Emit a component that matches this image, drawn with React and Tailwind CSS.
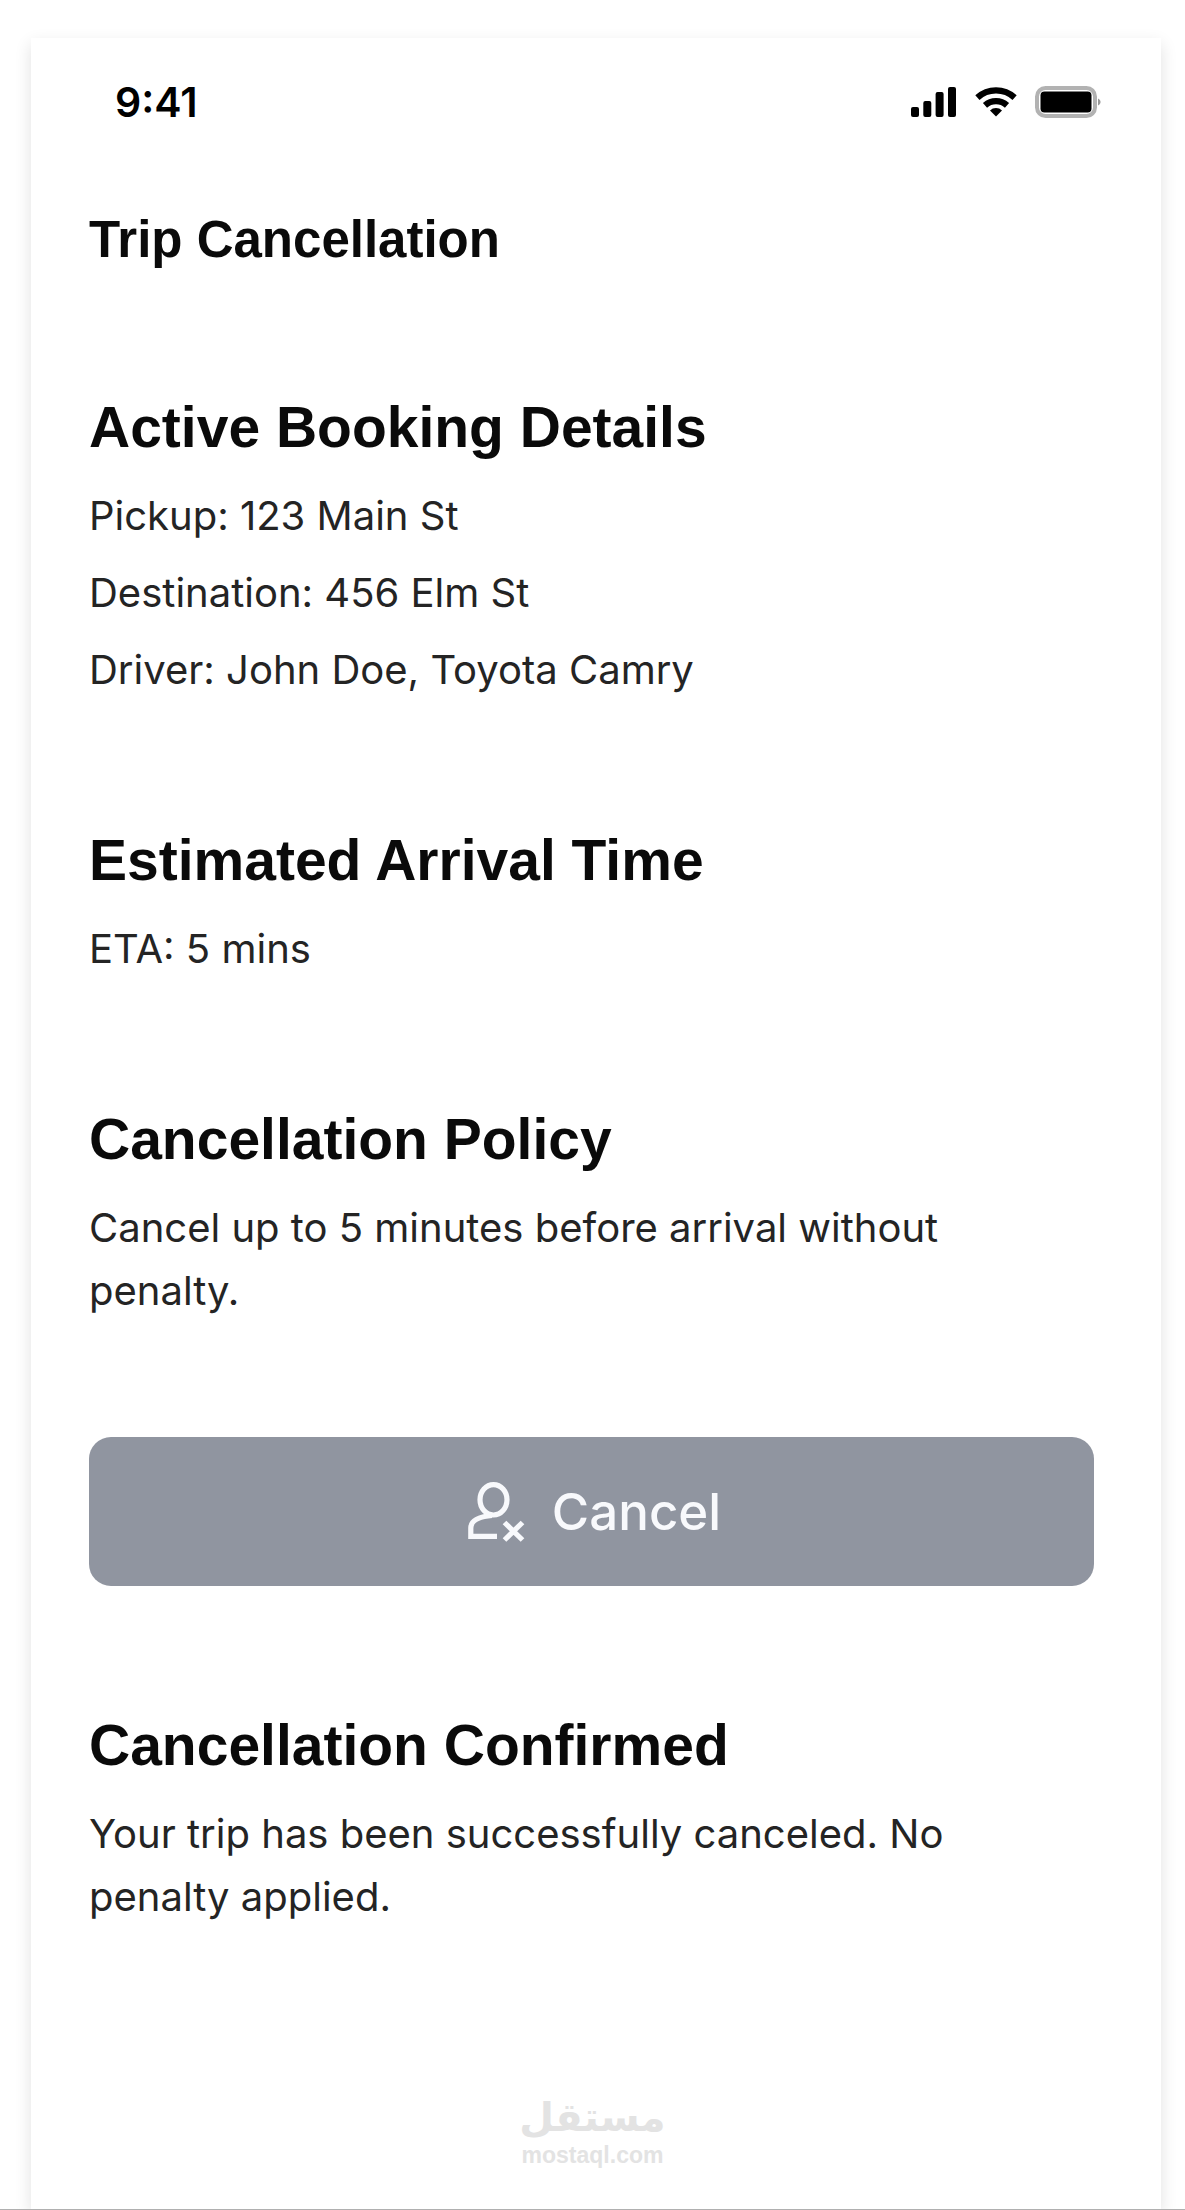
const sections = [
  {
    title: 'Active Booking Details',
    lines: ['Pickup: 123 Main St', 'Destination: 456 Elm St', 'Driver: John Doe, Toyota Camry']
  },
  {
    title: 'Estimated Arrival Time',
    lines: ['ETA: 5 mins']
  },
  {
    title: 'Cancellation Policy',
    lines: ['Cancel up to 5 minutes before arrival without penalty.'],
    action: true
  },
  {
    title: 'Cancellation Confirmed',
    lines: ['Your trip has been successfully canceled. No penalty applied.']
  }
]

function SignalIcon() {
  return (
    <svg className="w-[46px] h-[30px]" viewBox="0 0 46 30" fill="currentColor" aria-hidden="true">
      <rect x="0" y="20" width="8" height="10" rx="2" />
      <rect x="12.3" y="14" width="8" height="16" rx="2" />
      <rect x="24.6" y="5" width="8" height="25" rx="2" />
      <rect x="37" y="0" width="8" height="30" rx="2" />
    </svg>
  )
}

function WifiIcon() {
  return (
    <svg className="w-[42px] h-[30px]" viewBox="0 0 42 30" aria-hidden="true">
      <g fill="none" stroke="currentColor" strokeWidth="6.2">
        <path d="M2.4 10.6a27.5 27.5 0 0 1 37.2 0" />
        <path d="M10 18.4a16.5 16.5 0 0 1 22 0" />
      </g>
      <path d="M15 23.4a8.8 8.8 0 0 1 12 0L21 29.6z" fill="currentColor" />
    </svg>
  )
}

function BatteryIcon() {
  return (
    <svg className="w-[68px] h-[32px]" viewBox="0 0 68 32" aria-hidden="true">
      <rect x="2" y="2" width="58" height="28" rx="8.5" fill="none" stroke="#000" strokeOpacity="0.3" strokeWidth="4" />
      <rect x="5.5" y="5.5" width="51" height="21" rx="4" fill="#000" />
      <path d="M63 12.500c3.400 1.400 3.400 5.600 0 7z" fill="#000" fillOpacity="0.4" />
    </svg>
  )
}

function UserCancelIcon() {
  return (
    <svg className="w-[64px] h-[60px]" viewBox="-6 0 64 60" fill="none" stroke="currentColor" strokeWidth="5.2" aria-hidden="true">
      <ellipse cx="25.500" cy="17.800" rx="13.500" ry="15.200" />
      <path d="M24 33.500C12 34.500 2.800 38 2.800 46V54.400H29" />
      <path d="M36.500 40.500 54.500 58M54.500 40.500 36.500 58" />
    </svg>
  )
}

export default function App() {
  return (
    <div className="relative min-h-screen flex flex-col overflow-hidden bg-white border-b border-[#b0b0b0] pt-[38px] pl-[31px] pr-6 font-['Inter',sans-serif]">
      <main className="flex-1 bg-white shadow-[0_6px_16px_rgba(0,0,0,0.12)] pt-10 pb-60">
        {/* Status bar */}
        <div className="flex items-center justify-between pl-[84px] pr-[58px] text-black">
          <span className="text-[41px] leading-[48px] font-semibold">9:41</span>
          <div className="flex items-center gap-[18px]">
            <SignalIcon />
            <WifiIcon />
            <BatteryIcon />
          </div>
        </div>

        <div className="pl-[58px] pr-[67px]">
          <h1 className="mt-[82px] mb-[118px] text-[51px] leading-[64px] font-bold text-[#0a0a0a] font-['Liberation_Sans',sans-serif]">
            Trip Cancellation
          </h1>

          {/* Sections */}
          <div className="flex flex-col gap-[122px]">
            {sections.map(section => (
              <section key={section.title}>
                <h2 className="mb-5 text-[57px] leading-[74px] font-bold text-[#0a0a0a] font-['Liberation_Sans',sans-serif]">
                  {section.title}
                </h2>
                <div className="flex flex-col gap-[14px] pr-10 text-[40px] leading-[63px] text-[#242424]">
                  {section.lines.map(line => (
                    <p key={line}>{line}</p>
                  ))}
                </div>
                {section.action && (
                  <button
                    type="button"
                    className="mt-[115px] w-full h-[149px] flex items-center justify-center gap-[26px] rounded-[22px] bg-[#9095a0] text-[#f8f9fc]"
                  >
                    <UserCancelIcon />
                    <span className="text-[51px] leading-[64px] font-medium">Cancel</span>
                  </button>
                )}
              </section>
            ))}
          </div>
        </div>
      </main>

      {/* Watermark */}
      <div className="absolute inset-x-0 bottom-10 flex flex-col items-center font-bold text-[#e3e3e3] pointer-events-none">
        <span lang="ar" dir="rtl" className="text-[40px] leading-[48px] font-['DejaVu_Sans',sans-serif]">مستقل</span>
        <span className="text-[23px] leading-[28px] font-['Liberation_Sans',sans-serif]">mostaql.com</span>
      </div>
    </div>
  )
}
